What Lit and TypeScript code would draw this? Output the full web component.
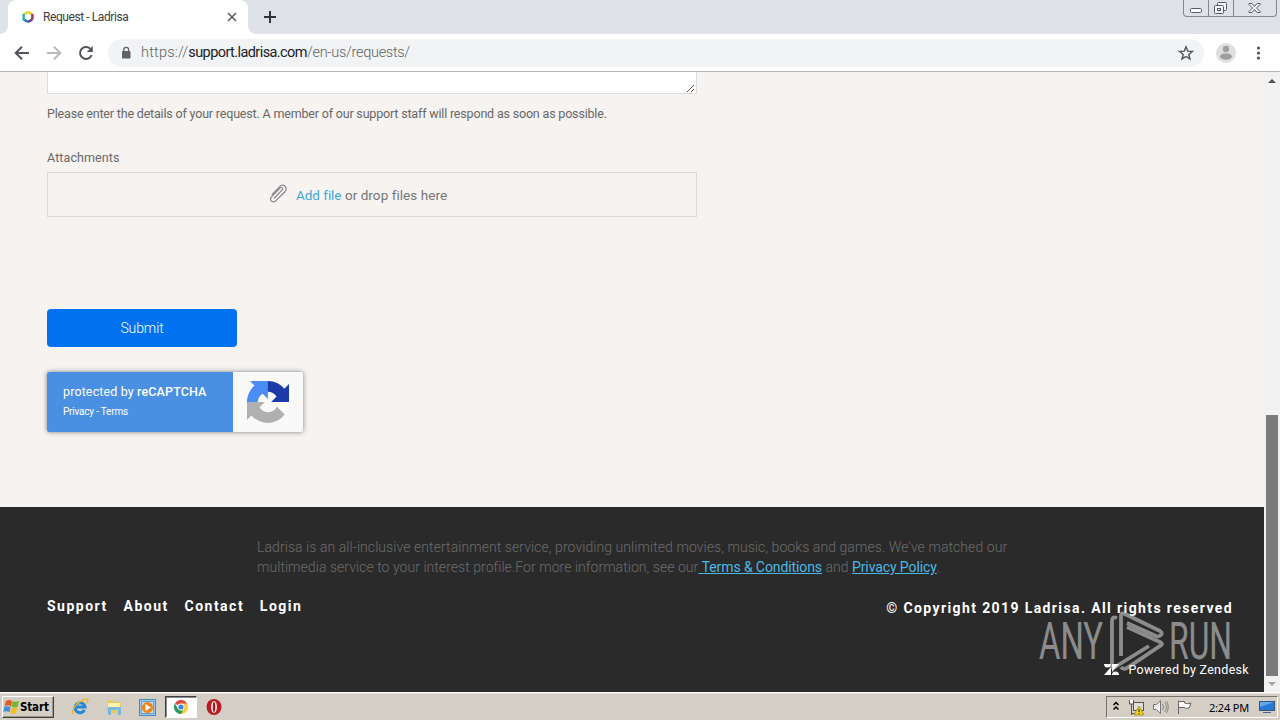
import { css, html, LitElement, svg } from 'lit';
import { customElement } from 'lit/decorators.js';

@customElement('browser-chrome')
export class BrowserChrome extends LitElement {
  static override styles = css`
    :host {
      display: block;
      font-family: Roboto, 'Liberation Sans', sans-serif;
    }
    svg {
      display: block;
      flex: none;
    }
    .tabs {
      display: flex;
      height: 34px;
      background: #dee1e8;
    }
    .flare {
      align-self: flex-end;
      width: 8px;
      height: 8px;
      background: radial-gradient(circle at 0 0, transparent 7.5px, #fff 8px);
    }
    .flare.right {
      background: radial-gradient(circle at 100% 0, transparent 7.5px, #fff 8px);
    }
    .tab {
      box-sizing: border-box;
      width: 240px;
      height: 34px;
      display: flex;
      align-items: center;
      padding: 0 10px 0 13px;
      background: #fff;
      border-radius: 8px 8px 0 0;
    }
    .title {
      flex: 1;
      margin-left: 8px;
      font-size: 12px;
      letter-spacing: -0.42px;
      color: #3c4043;
    }
    .plus {
      margin: 10px 0 0 7px;
    }
    .window {
      box-sizing: border-box;
      display: flex;
      width: 94px;
      height: 17px;
      margin: 0 3px 0 auto;
      border: 1px solid #858890;
      border-top: 0;
      border-radius: 0 0 4px 4px;
      overflow: hidden;
    }
    .window svg + svg {
      border-left: 1px solid #858890;
    }
    .toolbar {
      box-sizing: border-box;
      display: flex;
      align-items: center;
      height: 38px;
      padding-left: 12px;
      background: #fff;
      border-bottom: 1px solid #b3b4b6;
    }
    .nav {
      display: flex;
      gap: 12px;
    }
    .address {
      box-sizing: border-box;
      display: flex;
      align-items: center;
      width: 1096px;
      height: 28px;
      margin: 0 12px 0 12px;
      padding: 0 10px 0 12px;
      border-radius: 14px;
      background: #f1f3f4;
    }
    .url {
      flex: 1;
      margin-left: 9px;
      font-size: 14.5px;
      font-weight: 300;
      letter-spacing: 0.2px;
      color: #5f6368;
      white-space: nowrap;
    }
    .host {
      font-weight: 400;
      letter-spacing: -0.58px;
      color: #202124;
    }
    .path {
      letter-spacing: -0.28px;
    }
    .more {
      margin-left: 14px;
    }
  `;

  override render() {
    return html`
      <div class="tabs">
        <div class="flare"></div>
        <div class="tab">
          <svg width="14" height="14" viewBox="0 0 14 14" fill="none" stroke-width="2.600">
            <path d="M2.500 4.400 7 2" stroke="#d3df3c" />
            <path d="M7 2l4.400 2.400" stroke="#f0cf3e" />
            <path d="M11.400 4v5.400" stroke="#a33b68" />
            <path d="M11.400 9.400 7 12" stroke="#6c3c91" />
            <path d="M7 12 2.600 9.400" stroke="#237bc2" />
            <path d="M2.600 10V4" stroke="#35b6bd" />
          </svg>
          <span class="title">Request - Ladrisa</span>
          <svg width="12" height="12" viewBox="0 0 12 12" stroke="#5f6368" stroke-width="1.700">
            <path d="m2 2 8 8M10 2l-8 8" />
          </svg>
        </div>
        <div class="flare right"></div>
        <svg class="plus" width="14" height="14" viewBox="0 0 14 14" stroke="#303338" stroke-width="2">
          <path d="M7 1v12M1 7h12" />
        </svg>
        <div class="window">
          <svg width="24" height="16" viewBox="0 0 24 16" fill="#fff" stroke="#555a66">
            <rect x="6.500" y="8.500" width="11" height="4" rx="1" />
          </svg>
          <svg width="24" height="16" viewBox="0 0 24 16" fill="#f5f6f8" stroke="#555a66">
            <rect x="8.500" y="2.500" width="9" height="8" rx="1" />
            <rect x="5.500" y="5.500" width="9" height="8" rx="1" />
            <rect x="8.500" y="8.500" width="3" height="2" />
          </svg>
          <svg width="42" height="16" viewBox="0 0 42 16" fill="#fff" stroke="#555a66">
            <path d="M15 3.500h3l2.500 3 2.500-3h3v1L22.500 8l3.500 3.500v1h-3l-2.500-3-2.500 3h-3v-1L18.500 8 15 4.500z" />
          </svg>
        </div>
      </div>
      <div class="toolbar">
        <div class="nav">
          <svg width="20" height="20" viewBox="0 0 20 20" fill="none" stroke="#50545a" stroke-width="2">
            <path d="M17 10H4.500M10 3.700 3.700 10l6.300 6.300" />
          </svg>
          <svg width="20" height="20" viewBox="0 0 20 20" fill="none" stroke="#b9babd" stroke-width="2">
            <path d="M3 10h12.500M10 3.700l6.300 6.300-6.300 6.300" />
          </svg>
          <svg width="20" height="20" viewBox="0 0 20 20" fill="none" stroke="#50545a" stroke-width="2">
            <path d="M15.700 12A6 6 0 1 1 14.300 5.700" />
            <path d="M16.800 3v6h-6z" fill="#50545a" stroke="none" />
          </svg>
        </div>
        <div class="address">
          <svg width="12" height="14" viewBox="0 0 12 14">
            <rect x="2" y="5" width="8.500" height="7.500" rx="1" fill="#5f6368" />
            <path d="M3.800 5.500V3.700a2.400 2.400 0 0 1 4.800 0v1.800" fill="none" stroke="#5f6368" stroke-width="1.300" />
          </svg>
          <span class="url">https://<span class="host">support.ladrisa.com</span><span class="path">/en-us/requests/</span></span>
          <svg width="16" height="16" viewBox="0 0 16 16" fill="none" stroke="#50545a" stroke-width="1.400">
            <path d="m8 1.800 1.750 4.300 4.600.35-3.550 3 1.150 4.500L8 11.500l-3.950 2.450 1.150-4.500-3.550-3 4.600-.35z" />
          </svg>
        </div>
        <svg width="20" height="20" viewBox="0 0 20 20">
          <circle cx="10" cy="10" r="10" fill="#dfdfe0" />
          <circle cx="10" cy="6" r="3.200" fill="#9f9fa1" />
          <ellipse cx="10" cy="13.500" rx="6" ry="3.200" fill="#9f9fa1" />
        </svg>
        <svg class="more" width="18" height="18" viewBox="0 0 18 18" fill="#50545a">
          <circle cx="8.500" cy="4" r="1.600" />
          <circle cx="8.500" cy="9" r="1.600" />
          <circle cx="8.500" cy="14" r="1.600" />
        </svg>
      </div>
    `;
  }
}

@customElement('request-form')
export class RequestForm extends LitElement {
  static override styles = css`
    :host {
      display: block;
      height: 435px;
      padding-left: 47px;
      color: #686868;
      font: 12.5px/16px Roboto, 'Liberation Sans', sans-serif;
    }
    .description {
      box-sizing: border-box;
      display: flex;
      align-items: flex-end;
      justify-content: flex-end;
      width: 650px;
      height: 22px;
      border: 1px solid #ddd;
      border-top: 0;
      background: #fff;
    }
    .hint {
      padding-top: 12px;
      letter-spacing: -0.18px;
    }
    .label {
      padding-top: 28px;
      letter-spacing: 0.1px;
    }
    .drop {
      box-sizing: border-box;
      display: flex;
      align-items: center;
      width: 650px;
      height: 45px;
      margin-top: 6px;
      padding-left: 220px;
      border: 1px solid #dadada;
      font-size: 13.5px;
      color: #777;
    }
    .drop span {
      margin-left: 8px;
      letter-spacing: 0.06px;
    }
    .drop b {
      font-weight: 400;
      letter-spacing: -0.04px;
      color: #40a9dc;
    }
    .submit {
      display: block;
      width: 190px;
      height: 38px;
      margin-top: 92px;
      padding: 0;
      border: 0;
      border-radius: 4px;
      background: #0072ef;
      color: #fff;
      font: 300 14px Roboto, sans-serif;
      letter-spacing: -0.1px;
    }
    .captcha {
      display: flex;
      width: 256px;
      height: 60px;
      margin-top: 25px;
      border-radius: 2px;
      overflow: hidden;
      background: #f9f9f9;
      box-shadow: 0 0 5px #808080;
    }
    .blue {
      box-sizing: border-box;
      width: 186px;
      padding: 12px 0 0 16px;
      background: #4a90e2;
      color: #fff;
      letter-spacing: 0.13px;
    }
    .blue strong {
      font-weight: 500;
    }
    .terms {
      margin-top: 4px;
      font-size: 10px;
      letter-spacing: -0.2px;
    }
    .logo {
      margin: 9px 0 0 14px;
    }
  `;

  override render() {
    return html`
      <div class="description">
        <svg width="10" height="10" viewBox="0 0 10 10" stroke="#555" stroke-width="1">
          <path d="m1 9 7-7M5 9l3-3" />
        </svg>
      </div>
      <div class="hint">
        Please enter the details of your request. A member of our support staff will respond as soon as possible.
      </div>
      <div class="label">Attachments</div>
      <div class="drop">
        <svg width="20" height="22" viewBox="0 0 20 22" fill="none" stroke="#85868a" stroke-width="1.200">
          <path d="m6 14.500 8-8.300c1.700-1.800-.5-3.700-2-2.100l-8.500 8.700c-3 3.300 1.300 7 4.400 3.800L16.700 8c4.100-4.300-1.400-9.200-5.300-5.100L3.700 10.800" />
        </svg>
        <span><b>Add file</b> or drop files here</span>
      </div>
      <button class="submit">Submit</button>
      <div class="captcha">
        <div class="blue">
          <div>protected by <strong>reCAPTCHA</strong></div>
          <div class="terms">Privacy - Terms</div>
        </div>
        <svg class="logo" width="42" height="42" viewBox="0 0 64 64">
          <path d="M64 31.955l-.002-1.373V4.687l-7.159 7.160C50.980 4.674 42.061.093 32.070.093c-10.397 0-19.633 4.961-25.479 12.644l11.734 11.858a15.551 15.551 0 0 1 4.754-5.334c2.050-1.600 4.954-2.908 8.991-2.908.488 0 .864.057 1.141.164 5.002.395 9.337 3.155 11.890 7.162l-8.306 8.306z" fill="#1c3aa9" />
          <path d="M31.862.094l-1.373.002H4.594l7.160 7.160C4.580 13.115 0 22.033 0 32.025c0 10.397 4.961 19.633 12.644 25.479L24.502 45.770a15.551 15.551 0 0 1-5.334-4.754c-1.600-2.050-2.908-4.954-2.908-8.991 0-.488.057-.864.164-1.141.395-5.002 3.155-9.337 7.162-11.890l8.306 8.306z" fill="#4a8df5" />
          <path d="M.001 31.955l.002 1.373v25.895l7.160-7.160c5.859 7.173 14.778 11.754 24.769 11.754 10.397 0 19.633-4.961 25.479-12.644L45.677 39.315a15.551 15.551 0 0 1-4.754 5.334c-2.050 1.600-4.954 2.908-8.991 2.908-.488 0-.864-.057-1.141-.164-5.002-.395-9.337-3.155-11.890-7.162l8.306-8.306z" fill="#b0b0b0" />
        </svg>
      </div>
    `;
  }
}

@customElement('site-footer')
export class SiteFooter extends LitElement {
  static override styles = css`
    :host {
      box-sizing: border-box;
      display: block;
      height: 185px;
      padding-top: 30px;
      background: #2a2a2a;
      color: #fff;
      font-family: Roboto, 'Liberation Sans', sans-serif;
    }
    p {
      margin: 0 0 0 257px;
      color: #6c6c6c;
      font-size: 14px;
      font-weight: 300;
      line-height: 20px;
      white-space: nowrap;
      letter-spacing: 0.07px;
    }
    p + p {
      letter-spacing: 0.045px;
    }
    a {
      color: #4cb9e8;
      font-weight: 400;
      letter-spacing: -0.1px;
      text-decoration: underline;
    }
    .row {
      display: flex;
      justify-content: space-between;
      margin-top: 19px;
      padding: 0 31px 0 47px;
      font-size: 14px;
      font-weight: 700;
      line-height: 20px;
      letter-spacing: 1.4px;
    }
    nav {
      display: flex;
      gap: 15.7px;
      letter-spacing: 1.5px;
    }
    .copyright {
      padding-top: 2px;
      letter-spacing: 1.39px;
    }
    .powered {
      display: flex;
      align-items: center;
      justify-content: flex-end;
      gap: 9px;
      height: 20px;
      margin-top: 41px;
      padding-right: 15px;
      font-size: 12.5px;
      letter-spacing: 0.3px;
    }
  `;

  override render() {
    return html`
      <p>Ladrisa is an all-inclusive entertainment service, providing unlimited movies, music, books and games. We've matched our</p>
      <p>multimedia service to your interest profile.For more information, see our<a>&nbsp;Terms &amp; Conditions</a> and <a>Privacy Policy</a>.</p>
      <div class="row">
        <nav>
          <span>Support</span>
          <span>About</span>
          <span>Contact</span>
          <span>Login</span>
        </nav>
        <span class="copyright">© Copyright 2019 Ladrisa. All rights reserved</span>
      </div>
      <div class="powered">
        <svg width="15" height="11" viewBox="0 0 15 11" fill="#fff">
          <path d="M0 0h7a3.500 3.500 0 0 1-7 0M7 3v8H0zM8 0h7L8 8zM8 11a3.500 3.500 0 0 1 7 0z" />
        </svg>
        <span>Powered by Zendesk</span>
      </div>
    `;
  }
}

@customElement('task-bar')
export class TaskBar extends LitElement {
  static override styles = css`
    :host {
      box-sizing: border-box;
      display: flex;
      align-items: center;
      height: 28px;
      padding: 1px 2px 0 2px;
      background: #d5cec5;
      border-top: 1px solid #fff;
      box-shadow: inset 0 1px #e3ded7;
      font: 11px 'DejaVu Sans Condensed', 'DejaVu Sans', sans-serif;
      color: #000;
    }
    svg {
      display: block;
      flex: none;
    }
    .start {
      box-sizing: border-box;
      display: flex;
      align-items: center;
      width: 52px;
      height: 22px;
      border: 1px solid;
      border-color: #fff #404040 #404040 #fff;
      box-shadow: inset -1px -1px #9b958d;
      font-size: 11.5px;
      font-weight: 700;
      letter-spacing: -0.15px;
    }
    .apps {
      display: flex;
      align-items: center;
      margin-left: 10px;
      gap: 1.6px;
    }
    .app {
      box-sizing: border-box;
      display: flex;
      align-items: center;
      justify-content: center;
      width: 32px;
      height: 22px;
      border: 1px solid transparent;
    }
    .active {
      background: #fff;
      border-color: #404040 #fff #fff #404040;
      box-shadow: inset 1px 1px #888;
    }
    .tray {
      box-sizing: border-box;
      display: flex;
      align-items: center;
      width: 172px;
      height: 22px;
      margin-left: auto;
      padding-left: 5px;
      border: 1px solid;
      border-color: #77726c #fff #fff #77726c;
    }
    .clock {
      margin-left: 16px;
      width: 42px;
      font-family: 'Noto Sans', sans-serif;
      white-space: nowrap;
      letter-spacing: -0.2px;
    }
    .network {
      margin-left: 8px;
    }
    .sound,
    .flag {
      margin-left: 7px;
    }
    .desktop {
      margin-left: 8px;
    }
  `;

  override render() {
    return html`
      <div class="start">
        <svg width="17" height="18" viewBox="0 0 17 18">
          <path d="M3 3q3-2 6 0L8 8.500Q5 6 1.500 8.500z" fill="#e4582b" />
          <path d="M9.500 3q3 1.500 6.500 0L14.500 9Q12 10 8.500 8.500z" fill="#76b82a" />
          <path d="M1.300 9q3-1.500 6.200 0L6.500 14Q3.500 12.500.3 14z" fill="#3f8ede" />
          <path d="M8.300 9.300q3 1.500 6 .5L13 15.500q-3 1-6-1z" fill="#f5bd27" />
        </svg>
        Start
      </div>
      <div class="apps">
        <div class="app">
          <svg width="18" height="18" viewBox="0 0 18 18" fill="none">
            <path d="M13.500 12a5 5 0 1 1 .5-3H5" stroke="#2587d5" stroke-width="3" />
            <path d="M2.500 16C-1 15 4 6 10 3c7-4 8-1 5.500 2.500" stroke="#e9b92f" stroke-width="1.500" />
          </svg>
        </div>
        <div class="app">
          <svg width="18" height="18" viewBox="0 0 18 18">
            <path d="M2 2h6l1 2h7v11H2z" fill="#eac960" />
            <path d="M3 5h12v4H3z" fill="#fff3ab" />
            <path d="M3 9h13v8h-3v-5H6v5H3z" fill="#78b8e0" />
          </svg>
        </div>
        <div class="app">
          <svg width="17" height="17" viewBox="0 0 17 17">
            <rect x=".5" y=".5" width="16" height="16" fill="#9bc5e6" stroke="#4889be" />
            <rect x="2.500" y="2.500" width="12" height="12" fill="#c6e0f3" stroke="#6ba0cb" />
            <circle cx="8.500" cy="8.500" r="5.500" fill="#f08418" />
            <path d="m6.500 5 5.500 3.500L6.500 12z" fill="#fff" />
          </svg>
        </div>
        <div class="app active">
          <svg width="14" height="14" viewBox="0 0 14 14">
            <path d="M7 7 .9 3.500A7 7 0 0 1 13.100 3.500z" fill="#dd4b3e" />
            <path d="M7 7V3.500h6.100A7 7 0 0 1 7 14z" fill="#f8cd3c" />
            <path d="M7 14A7 7 0 0 1 .9 3.500L4 8.800l3 1.700 2 0z" fill="#269c59" />
            <circle cx="7" cy="7" r="3.400" fill="#fff" />
            <circle cx="7" cy="7" r="2.600" fill="#4285d8" />
          </svg>
        </div>
        <div class="app">
          <svg width="16" height="16" viewBox="0 0 16 16">
            <ellipse cx="8" cy="8" rx="7.500" ry="8" fill="#b91c22" />
            <ellipse cx="8" cy="8" rx="3" ry="6" fill="#f3e6e6" />
            <ellipse cx="8" cy="8" rx="1.200" ry="5" fill="#a8181c" />
          </svg>
        </div>
      </div>
      <div class="tray">
        <svg width="8" height="14" viewBox="0 0 8 14" fill="none" stroke="#000" stroke-width="1.500">
          <path d="m1.500 5 2.500-2.500L6.500 5M1.500 9.500 4 7l2.500 2.500" />
        </svg>
        <svg class="network" width="17" height="17" viewBox="0 0 17 17" fill="none" stroke="#555">
          <rect x="5.500" y="3.500" width="10" height="8" fill="#dedede" />
          <path d="M1.500 1v4h4V1M3.500 5v11M7 14.500H3.500" fill="#fff" />
          <path d="m11 7 5 9H6z" fill="#f5cf29" stroke="#b99511" />
          <path d="M11 10v3M11 14v1" stroke="#222" />
        </svg>
        <svg class="sound" width="17" height="16" viewBox="0 0 17 16" fill="none" stroke="#777">
          <path d="M1.500 5.500h3l4-4v13l-4-4h-3z" fill="#f4f4f4" />
          <path d="M10.500 5q2 3 0 6M12.500 3q4 5 0 10M14.500 2q3.500 6 0 12" stroke-width=".8" />
        </svg>
        <svg class="flag" width="17" height="16" viewBox="0 0 17 16" fill="#fff" stroke="#666">
          <path d="M2.500 15V1.500M2.500 2.500h6v1.500q3 1.500 6.500 0l-2 5q-3 1-5-.5h-5.500z" />
        </svg>
        <span class="clock">2:24 PM</span>
        <svg class="desktop" width="16" height="14" viewBox="0 0 16 14">
          <rect x=".5" y="1.500" width="15" height="9" fill="#2878d4" stroke="#36577d" />
          <path d="M1 2h14L1 7z" fill="#62a4ed" />
          <path d="M4 12.500h8" stroke="#52657b" />
        </svg>
      </div>
    `;
  }
}

const playMark = svg`
  <path d="M81 10q-5-2-5 3v45q0 3 3 1l34-21" />
  <path d="M85 48V8q0-4 4-2l35 17q3 2 1 4t-5 1L91 15" />
  <path d="M91 19l33 15q4 2 0 4L91 60q-4 2-6-1" />
`;

@customElement('app-root')
export class AppRoot extends LitElement {
  static override styles = css`
    :host {
      display: block;
      position: relative;
      width: 1280px;
      height: 720px;
      overflow: hidden;
    }
    .viewport {
      display: flex;
      height: 620px;
    }
    .page {
      width: 1264px;
      background: #f6f3f1;
    }
    .scrollbar {
      box-sizing: border-box;
      display: flex;
      flex-direction: column;
      align-items: center;
      justify-content: space-between;
      width: 16px;
      height: 620px;
      background: #f1f1f1;
    }
    .thumb {
      width: 12px;
      height: 261px;
      margin-top: auto;
      background: #7b7b7b;
    }
    .scrollbar svg {
      display: block;
      flex: none;
    }
    /* watermark lies over the footer */
    .watermark {
      position: absolute;
      left: 1036px;
      top: 608px;
      overflow: visible;
      opacity: 0.5;
    }
    .watermark text {
      font-family: Roboto, 'Liberation Sans', sans-serif;
      font-size: 52px;
      font-weight: 400;
    }
  `;

  override render() {
    return html`
      <browser-chrome></browser-chrome>
      <div class="viewport">
        <div class="page">
          <request-form></request-form>
          <site-footer></site-footer>
        </div>
        <div class="scrollbar">
          <svg width="16" height="17" viewBox="0 0 16 17"><path d="m4 11 4-4 4 4z" fill="#505050" /></svg>
          <div class="thumb"></div>
          <svg width="16" height="16" viewBox="0 0 16 16"><path d="m4 6 4 4 4-4z" fill="#a3a3a3" /></svg>
        </div>
      </div>
      <task-bar></task-bar>
      <svg class="watermark" width="204" height="66" viewBox="0 0 204 66" fill="none" stroke="#eee" stroke-width="3.800">
        <g fill="#eee" stroke="none">
          <text x="3" y="51" textLength="64" lengthAdjust="spacingAndGlyphs">ANY</text>
          <text x="133" y="51" textLength="63" lengthAdjust="spacingAndGlyphs">RUN</text>
        </g>
        ${playMark}
      </svg>
    `;
  }
}

declare global {
  interface HTMLElementTagNameMap {
    'browser-chrome': BrowserChrome;
    'request-form': RequestForm;
    'site-footer': SiteFooter;
    'task-bar': TaskBar;
    'app-root': AppRoot;
  }
}
